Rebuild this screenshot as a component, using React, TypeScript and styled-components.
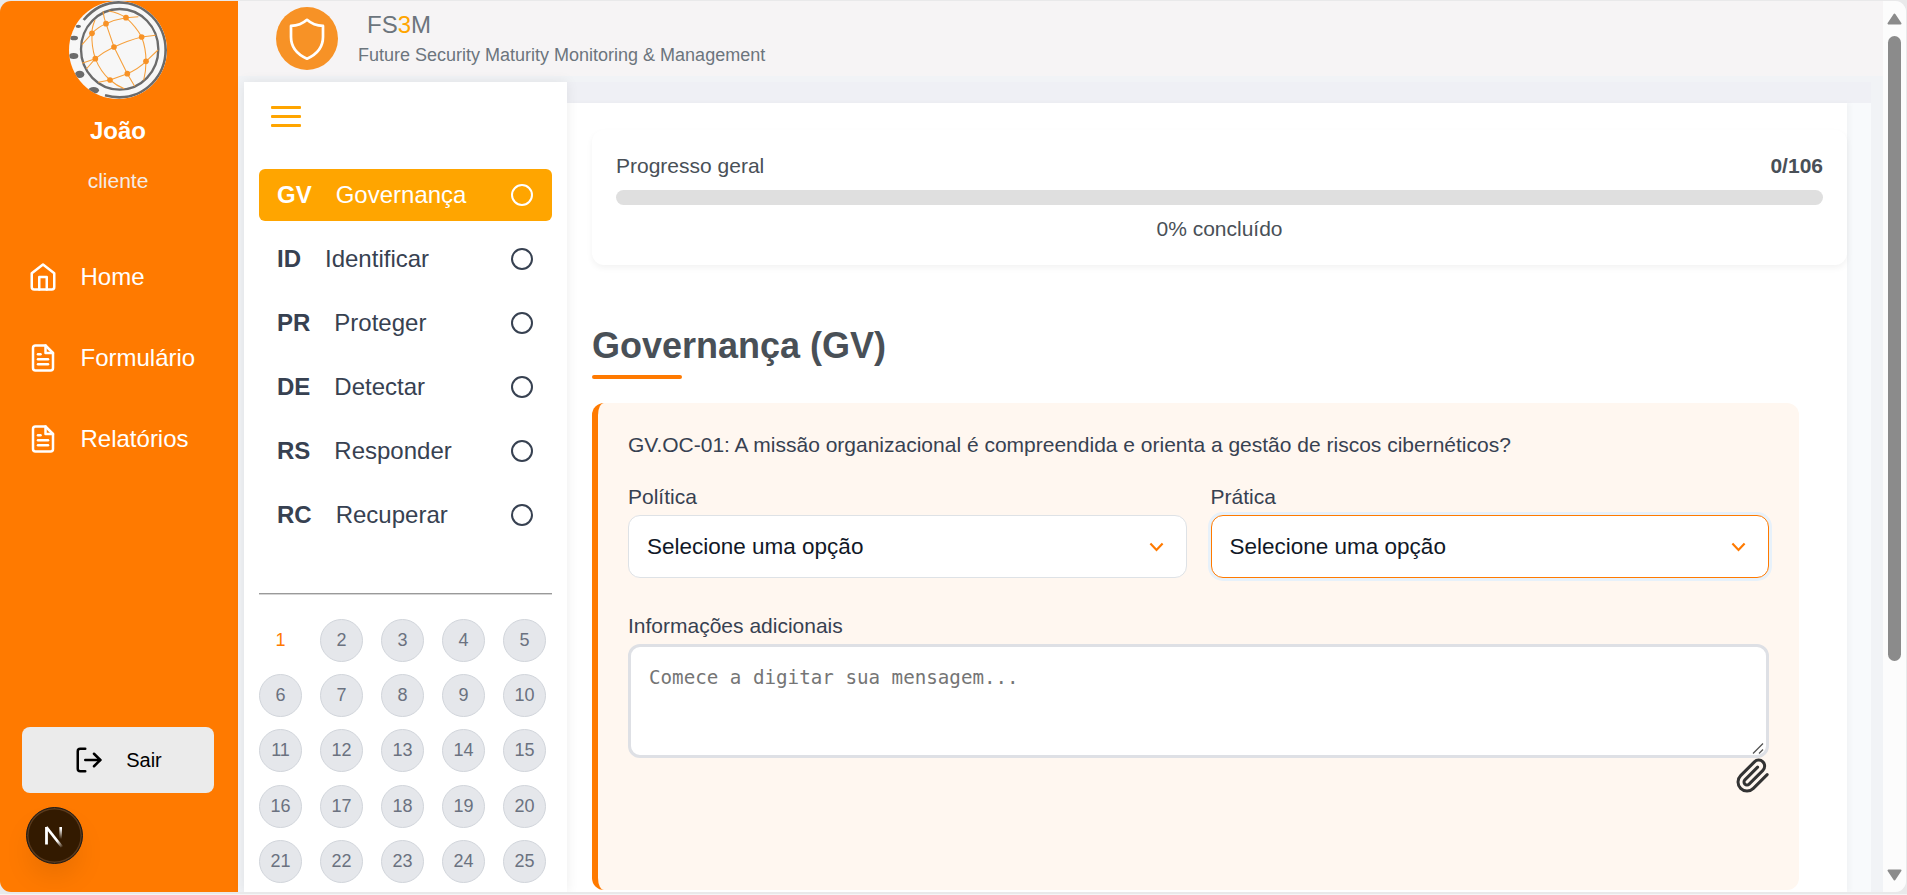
import React from "react";
import styled, { createGlobalStyle, css } from "styled-components";
import { FiFileText, FiHome, FiLogOut, FiPaperclip } from "react-icons/fi";

const GlobalStyle = createGlobalStyle`
  *, *::before, *::after { box-sizing: border-box; }
  body {
    margin: 0;
    background: #f2f3f5;
    font-family: "Liberation Sans", Arial, sans-serif;
    overflow: hidden;
  }
  button, textarea { margin: 0; font-family: inherit; }
`;

const orange = "#ff7a00";
const amber = "#ffa500";

const Frame = styled.div`
  width: 1907px;
  height: 895px;
  padding: 1px 1px 3px 0;
  background: #e9e9ea;
  box-shadow: inset 0 -1px 0 #f5f5f5;
`;

const Viewport = styled.div`
  display: flex;
  width: 1906px;
  height: 891px;
  border-radius: 11px;
  overflow: hidden;
  background: #f0f2f5;
`;

const Sidebar = styled.aside`
  position: relative;
  display: flex;
  flex-direction: column;
  align-items: center;
  width: 238px;
  flex-shrink: 0;
  background: ${orange};
  color: #fff;
  padding: 0 2px 99px 0;
`;

const UserName = styled.strong`
  margin-top: 18px;
  font-size: 24px;
  line-height: 28px;
`;

const UserRole = styled.span`
  margin-top: 24px;
  font-size: 21px;
  line-height: 24px;
  color: #f3ece6;
`;

const Nav = styled.nav`
  display: flex;
  flex-direction: column;
  align-self: stretch;
  gap: 51px;
  margin-top: 69px;
  padding-left: 28px;
`;

const NavLink = styled.a`
  display: flex;
  align-items: center;
  gap: 22.5px;
  height: 30px;
  font-size: 24px;
  line-height: 28px;
`;

const LogoutButton = styled.button`
  display: flex;
  align-items: center;
  justify-content: center;
  gap: 22px;
  width: 192px;
  height: 66px;
  margin-top: auto;
  border: 0;
  border-radius: 8px;
  background: #ebebeb;
  color: #000;
  font-size: 20px;
`;

const DevBadge = styled.div`
  position: absolute;
  left: 26px;
  bottom: 28px;
  display: grid;
  place-items: center;
  width: 57px;
  height: 57px;
  padding-right: 1px;
  border-radius: 50%;
  background: #331a00;
  border: 1px solid #1c1c1c;
  box-shadow: inset 0 0 0 1.5px #5a3a1c, 0 16px 32px -8px rgba(0, 0, 0, 0.14);
`;

const Page = styled.div`
  display: flex;
  flex-direction: column;
  flex: 1;
  min-width: 0;
`;

const Header = styled.header`
  display: flex;
  align-items: flex-start;
  gap: 20px;
  height: 75px;
  flex-shrink: 0;
  padding: 6px 0 0 38px;
  background: #f6f4f5;
  color: #6c757d;
`;

const Brand = styled.div`
  display: flex;
  flex-direction: column;
  padding-top: 4px;
`;

const BrandName = styled.div`
  padding-left: 9px;
  font-size: 24px;
  line-height: 28px;
  span { color: ${amber}; }
`;

const Tagline = styled.div`
  margin-top: 4px;
  font-size: 18px;
  line-height: 24px;
`;

const Body = styled.div`
  display: flex;
  flex: 1;
  min-height: 0;
  padding: 6px 12px 0 6px;
  background: #f1f3f6;
`;

const Panel = styled.aside`
  position: relative;
  z-index: 1;
  width: 323px;
  flex-shrink: 0;
  padding: 24px 15px 0;
  background: #fff;
  box-shadow: 0 0 12px rgba(0, 0, 0, 0.08);
`;

const MenuButton = styled.div`
  display: flex;
  flex-direction: column;
  gap: 6px;
  width: 30px;
  margin-left: 12px;
  padding-top: 0.4px;
  span { height: 3px; border-radius: 1px; background: ${amber}; }
`;

const Categories = styled.div`
  display: flex;
  flex-direction: column;
  gap: 12px;
  margin-top: 41.6px;
`;

const Category = styled.div<{ $active?: boolean }>`
  display: flex;
  align-items: center;
  gap: 24px;
  height: 52px;
  padding: 0 18px;
  border-radius: 6px;
  font-size: 24px;
  line-height: 28px;
  color: #374151;
  ${(p) => p.$active && css`background: ${amber}; color: #fff;`}
`;

const StatusRing = styled.i`
  width: 22px;
  height: 22px;
  margin: 0 1px 0 auto;
  border: 2px solid currentColor;
  border-radius: 50%;
`;

const Divider = styled.hr`
  margin: 52px 0 0;
  border: 0;
  border-top: 1px solid #9a9a9a;
  border-bottom: 1px solid #d5d5d5;
`;

const Pages = styled.div`
  display: grid;
  grid-template-columns: repeat(5, 43px);
  gap: 12.25px 18px;
  margin-top: 24px;
`;

const PageDot = styled.div<{ $current?: boolean }>`
  height: 43px;
  border-radius: 50%;
  border: 1px solid ${(p) => (p.$current ? "transparent" : "#d1d5db")};
  background: ${(p) => (p.$current ? "transparent" : "#e5e7eb")};
  color: ${(p) => (p.$current ? orange : "#6b7280")};
  font-size: 18px;
  line-height: 40px;
  text-align: center;
`;

const Content = styled.div`
  flex: 1;
  display: flex;
  padding: 21px 24px 0 0;
  min-width: 0;
  background: linear-gradient(#eff0f5 21px, #f8fafc 21px);
`;

const Main = styled.main`
  flex: 1;
  min-width: 0;
  padding: 27px 0 0 25px;
  background: #fff;
  box-shadow: 3px 0 5px rgba(0, 0, 0, 0.03);
`;

const ProgressCard = styled.section`
  height: 135px;
  padding: 24px;
  border-radius: 12px;
  background: #fff;
  box-shadow: 0 3px 6px rgba(0, 0, 0, 0.05);
  color: #495057;
  font-size: 21px;
  line-height: 24px;
`;

const ProgressHead = styled.div`
  display: flex;
  justify-content: space-between;
`;

const ProgressTrack = styled.div`
  height: 15px;
  margin: 12px 0;
  border-radius: 8px;
  background: #dfdfdf;
`;

const ProgressText = styled.div`
  text-align: center;
`;

const SectionTitle = styled.h2`
  margin: 60px 0 0;
  color: #495057;
  font-size: 36px;
  line-height: 42px;
  &::after {
    content: "";
    display: block;
    width: 90px;
    height: 4px;
    margin-top: 8px;
    border-radius: 2px;
    background: ${orange};
  }
`;

const Question = styled.section`
  display: flex;
  flex-direction: column;
  height: 487px;
  margin: 24px 48px 0 0;
  padding: 30px;
  border-left: 6px solid ${orange};
  border-radius: 12px;
  background: #fff7f0;
  color: #374151;
  font-size: 21px;
  line-height: 24px;
`;

const Fields = styled.div`
  display: grid;
  grid-template-columns: 1fr 1fr;
  gap: 24px;
  margin: 28px 0 36px;
`;

const Field = styled.div`
  display: flex;
  flex-direction: column;
  gap: 6px;
`;

const Select = styled.div<{ $focused?: boolean }>`
  display: flex;
  align-items: center;
  justify-content: space-between;
  height: 63px;
  padding: 0 22px 0 18px;
  border: 1px solid ${(p) => (p.$focused ? orange : "#dee2e6")};
  border-radius: 12px;
  background: #fff;
  box-shadow: ${(p) => (p.$focused ? "0 0 0 3px #e7f1fa" : "none")};
  color: #111827;
  font-size: 22.5px;
`;

const MessageWrap = styled.div`
  position: relative;
  display: flex;
`;

const Message = styled.textarea`
  width: 100%;
  height: 114px;
  padding: 19px 18px 17px;
  border: 3px solid #dee0e5;
  border-radius: 12px;
  background: #fff;
  resize: none;
  outline: 0;
  font-family: "DejaVu Sans Mono", monospace;
  font-size: 19.2px;
  line-height: 24px;
  &::placeholder { color: #757575; }
`;

const ResizeGrip = styled.svg`
  position: absolute;
  right: 4px;
  bottom: 3px;
`;

const Attach = styled.div`
  display: flex;
  justify-content: flex-end;
  margin-right: -2px;
  color: #333;
`;

const Scrollbar = styled.div`
  display: flex;
  flex-direction: column;
  align-items: center;
  width: 23px;
  flex-shrink: 0;
  padding: 12px 0 11px;
  background: #fcfcfc;
  svg { flex-shrink: 0; }
`;

const Thumb = styled.div`
  width: 13px;
  height: 625px;
  margin: 11px 0 auto;
  border-radius: 7px;
  background: #8b8b8b;
`;

const Avatar = () => (
  <svg width="98" height="98" viewBox="207 3 294 294" fill="none">
    <defs>
      <clipPath id="coin"><circle cx="354" cy="150" r="147" /></clipPath>
    </defs>
    <g clipPath="url(#coin)">
      <rect x="207" y="3" width="294" height="294" fill="#f7f7f7" />
      <g fill="#6b6b6b">
        <ellipse cx="235" cy="79" rx="8" ry="5" />
        <ellipse cx="222" cy="114" rx="12" ry="7" />
        <ellipse cx="221" cy="168" rx="14" ry="9" />
        <ellipse cx="239" cy="223" rx="14" ry="11" />
        <ellipse cx="281" cy="271" rx="16" ry="10" />
      </g>
      <ellipse cx="359" cy="148" rx="116" ry="121" stroke="#6b6b6b" strokeWidth="7" />
      <path d="M251 60C280 25 318 7 357 7C435 7 497 72 497 150S435 292 359 292Q336 292 315 286" stroke="#6b6b6b" strokeWidth="8" />
    </g>
    <g stroke="#f6a03c" strokeWidth="3.2">
      <path d="M309 34Q312 55 318 71L342 141L382 221L404 259" />
      <path d="M285 60Q275 84 276 100Q274 140 286 176Q302 216 330 240Q349 257 373 266" />
      <path d="M246 134L276 100Q293 81 318 71Q346 58 378 53L415 50" />
      <path d="M326 33Q355 38 378 53Q408 80 425 111Q438 145 438 184Q438 215 431 241" />
      <path d="M259 207L286 176Q310 156 342 141Q385 121 425 111L467 106" />
      <path d="M246 190L286 176" />
      <path d="M295 247L330 240L382 221Q416 206 438 184L474 150" />
    </g>
    <g fill="#f79226">
      {[[318, 71], [378, 53], [276, 100], [425, 111], [342, 141], [286, 176], [438, 184], [382, 221], [330, 240]].map(
        ([x, y]) => <circle key={x} cx={x} cy={y} r="8.5" />
      )}
    </g>
  </svg>
);

const ShieldLogo = () => (
  <svg width="62" height="63" viewBox="0 0 62 63" fill="none">
    <ellipse cx="31" cy="31.5" rx="31" ry="31.5" fill="#f79226" />
    <path d="M31 12.8Q24.5 18.6 15 18.9V30C15 40.5 21.5 47.5 31 51.7C40.5 47.5 47 40.5 47 30V18.9Q37.5 18.6 31 12.8Z" stroke="#fff" strokeWidth="2.7" strokeLinejoin="round" />
  </svg>
);

const Chevron = () => (
  <svg width="15" height="10" viewBox="0 0 15 10" fill="none">
    <path d="M1.4 1.6L7.5 7.9L13.6 1.6" stroke={orange} strokeWidth="2.2" />
  </svg>
);

const NextMark = () => (
  <svg width="24" height="28" viewBox="0 0 24 28" fill="none">
    <defs>
      <linearGradient id="diag" x1="12" y1="14" x2="21" y2="25" gradientUnits="userSpaceOnUse">
        <stop offset=".4" stopColor="#fff" />
        <stop offset="1" stopColor="#fff" stopOpacity="0" />
      </linearGradient>
      <linearGradient id="stem" x1="0" y1="4" x2="0" y2="17" gradientUnits="userSpaceOnUse">
        <stop offset=".2" stopColor="#fff" />
        <stop offset="1" stopColor="#fff" stopOpacity="0" />
      </linearGradient>
    </defs>
    <path d="M4.5 22.5V5" stroke="#fff" strokeWidth="2.8" />
    <path d="M4.3 5L20 25" stroke="url(#diag)" strokeWidth="2.8" />
    <path d="M18.7 5V17" stroke="url(#stem)" strokeWidth="2.6" />
  </svg>
);

const ScrollArrow = ({ down }: { down?: boolean }) => (
  <svg width="15" height="12" viewBox="0 0 15 12">
    <path
      d={down ? "M1.5 1.5H13.5L7.5 10.5Z" : "M1.5 10.5H13.5L7.5 1.5Z"}
      fill="#8b8b8b" stroke="#8b8b8b" strokeWidth="2" strokeLinejoin="round"
    />
  </svg>
);

const categories = [
  ["GV", "Governança"],
  ["ID", "Identificar"],
  ["PR", "Proteger"],
  ["DE", "Detectar"],
  ["RS", "Responder"],
  ["RC", "Recuperar"],
];

export default function App() {
  return (
    <Frame>
      <GlobalStyle />
      <Viewport>
        <Sidebar>
          <Avatar />
          <UserName>João</UserName>
          <UserRole>cliente</UserRole>
          <Nav>
            <NavLink><FiHome size={30} />Home</NavLink>
            <NavLink><FiFileText size={30} />Formulário</NavLink>
            <NavLink><FiFileText size={30} />Relatórios</NavLink>
          </Nav>
          <LogoutButton><FiLogOut size={30} />Sair</LogoutButton>
          <DevBadge><NextMark /></DevBadge>
        </Sidebar>
        <Page>
          <Header>
            <ShieldLogo />
            <Brand>
              <BrandName>FS<span>3</span>M</BrandName>
              <Tagline>Future Security Maturity Monitoring &amp; Management</Tagline>
            </Brand>
          </Header>
          <Body>
            <Panel>
              <MenuButton><span /><span /><span /></MenuButton>
              <Categories>
                {categories.map(([code, name], i) => (
                  <Category key={code} $active={i === 0}>
                    <strong>{code}</strong>
                    <span>{name}</span>
                    <StatusRing />
                  </Category>
                ))}
              </Categories>
              <Divider />
              <Pages>
                {Array.from({ length: 25 }, (_, i) => (
                  <PageDot key={i} $current={i === 0}>{i + 1}</PageDot>
                ))}
              </Pages>
            </Panel>
            <Content>
              <Main>
                <ProgressCard>
                  <ProgressHead><span>Progresso geral</span><strong>0/106</strong></ProgressHead>
                  <ProgressTrack />
                  <ProgressText>0% concluído</ProgressText>
                </ProgressCard>
                <SectionTitle>Governança (GV)</SectionTitle>
                <Question>
                  <div>GV.OC-01: A missão organizacional é compreendida e orienta a gestão de riscos cibernéticos?</div>
                  <Fields>
                    <Field>
                      <span>Política</span>
                      <Select>Selecione uma opção<Chevron /></Select>
                    </Field>
                    <Field>
                      <span>Prática</span>
                      <Select $focused>Selecione uma opção<Chevron /></Select>
                    </Field>
                  </Fields>
                  <Field>
                    <span>Informações adicionais</span>
                    <MessageWrap>
                      <Message placeholder="Comece a digitar sua mensagem..." />
                      <ResizeGrip width="13" height="13" viewBox="0 0 13 13">
                        <path d="M1 11.5L11 1.5M7 11.5L11 7.5" stroke="#555" strokeWidth="1.3" />
                      </ResizeGrip>
                    </MessageWrap>
                  </Field>
                  <Attach><FiPaperclip size={36} /></Attach>
                </Question>
              </Main>
            </Content>
          </Body>
        </Page>
        <Scrollbar>
          <ScrollArrow />
          <Thumb />
          <ScrollArrow down />
        </Scrollbar>
      </Viewport>
    </Frame>
  );
}
